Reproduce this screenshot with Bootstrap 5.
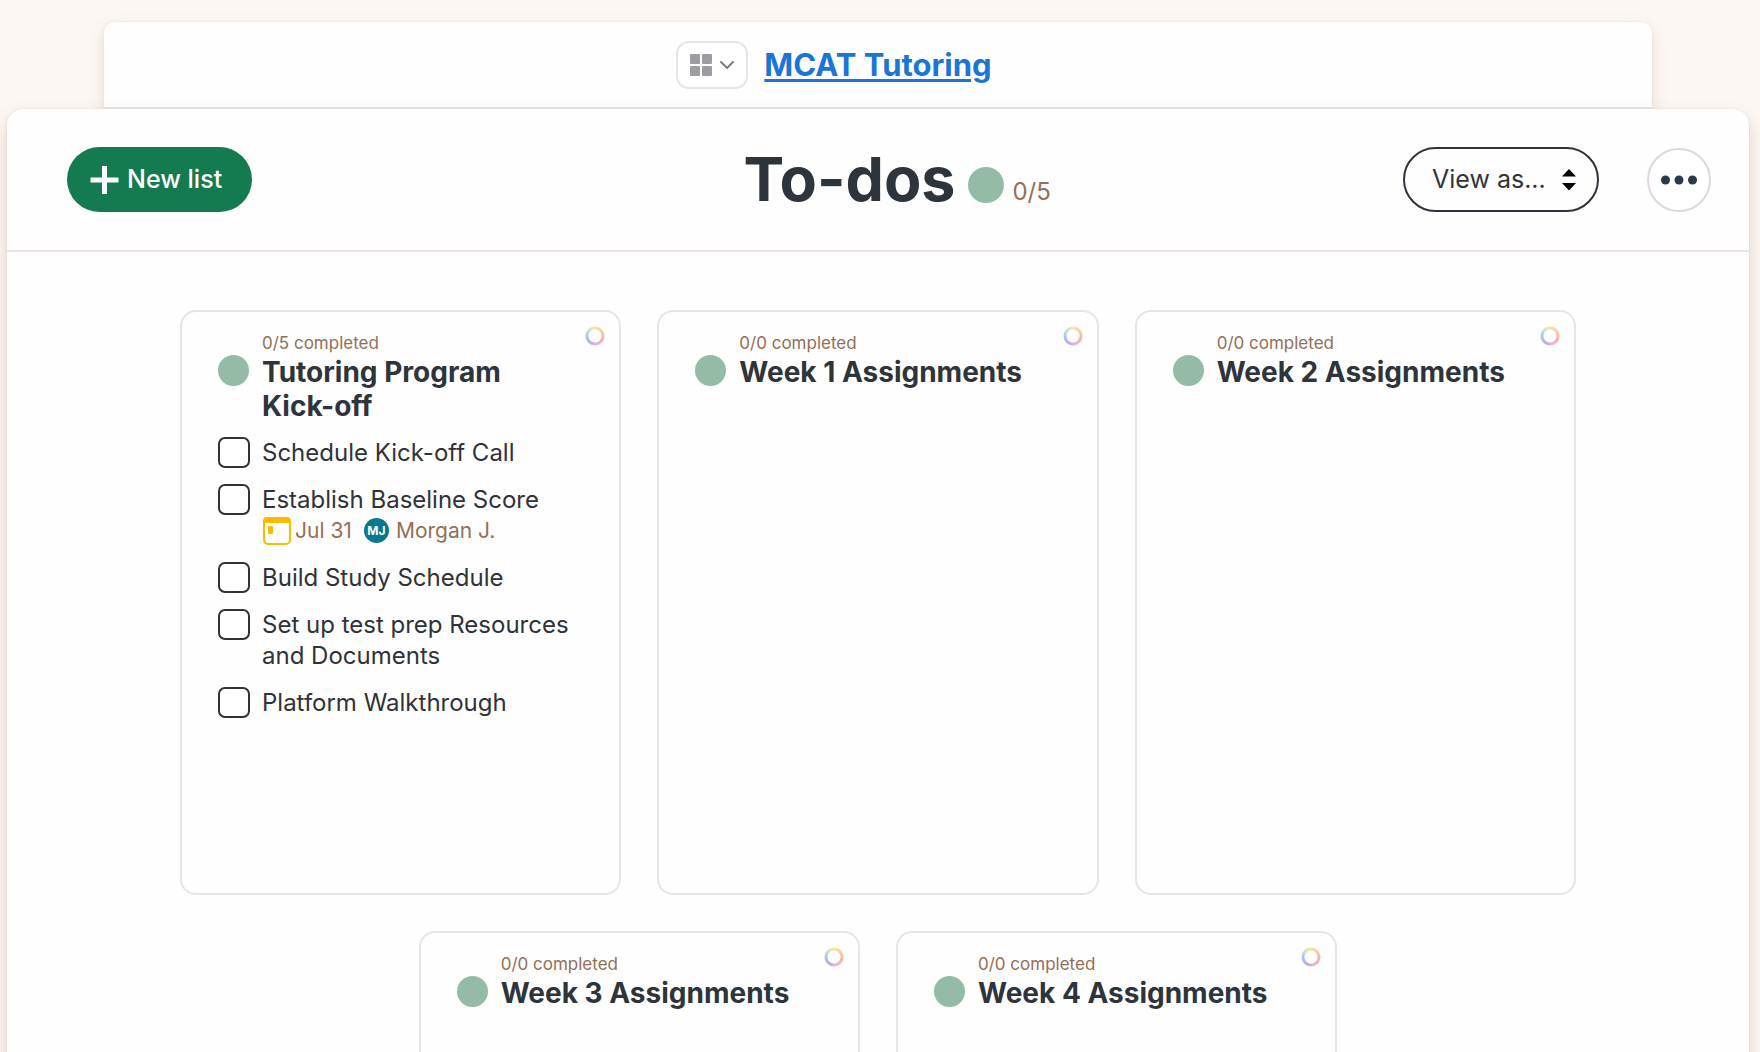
<!DOCTYPE html>
<html lang="en">
<head>
<meta charset="utf-8">
<meta name="viewport" content="width=device-width, initial-scale=1">
<title>To-dos</title>
<link href="https://cdn.jsdelivr.net/npm/bootstrap@5.3.0/dist/css/bootstrap.min.css" rel="stylesheet">
<style>
  :root { --ink: #2e343b; --tan: #936f56; --line: #e5e4e7; --sage: #94bba6; }
  html { overflow: hidden; }
  body { font-family: Inter, "Liberation Sans", sans-serif; color: var(--ink); background: #fdf7f3; padding: 22px 11px 0 7px; height: 100vh; overflow: hidden; }
  .sheet-back { margin: 0 97px; height: 87px; border-radius: 10px 10px 0 0; background: #fefefe; box-shadow: 0 6px 16px rgba(110, 80, 40, .16), 0 0 2px rgba(110, 70, 30, .1); border-bottom: 2px solid #ebe9eb; }
  .sheet { background: #fefefe; border-radius: 16px 16px 0 0; box-shadow: 0 8px 18px rgba(110, 60, 30, .2), 0 0 2px rgba(110, 70, 30, .12); position: relative; }
  .tri { display: grid; grid-template-columns: 1fr auto 1fr; align-items: center; }
  .switcher { width: 72px; height: 48px; border: 2px solid var(--line); border-radius: 13px; background: #fff; margin-right: 16px; }
  .project-link { font-size: 31px; line-height: 40px; font-weight: 700; color: #1b75d8; text-decoration: underline; text-decoration-thickness: 3px; text-underline-offset: 3px; }
  .bar { padding: 38px; border-bottom: 2px solid #efe3dd; }
  .btn-new { --bs-btn-font-size: 25px; --bs-btn-line-height: 1; --bs-btn-padding-y: 0; --bs-btn-padding-x: 23px; --bs-btn-color: #fff; --bs-btn-bg: #147a4f; --bs-btn-hover-bg: #0f6440; --bs-btn-hover-color: #fff; --bs-btn-border-width: 0; height: 65px; gap: 8px; margin-left: 22px; padding-right: 30px; font-weight: 500; }
  .page-title { font-size: 61px; line-height: 65px; font-weight: 700; }
  .dot { flex: none; display: block; border-radius: 50%; background: var(--sage); width: 31px; height: 31px; }
  .dot-lg { width: 36px; height: 36px; margin: 10px 8px 0 13px; }
  .tally { font-size: 24px; line-height: 30px; color: var(--tan); padding-top: 24px; }
  .view-select { appearance: none; width: 196px; height: 65px; border: 2px solid var(--ink); border-radius: 33px; background: transparent; color: #33343a; font-size: 25px; padding: 0 40px 0 27px; }
  .view-arrows { position: absolute; right: 23px; top: 22px; pointer-events: none; }
  .btn-more { width: 64px; height: 64px; border: 2px solid #dcd9de; border-radius: 50%; background: #fff; color: #2c3a45; }
  .lists { padding: 58px 173px 0; gap: 36px; }
  .todo-list { flex: 0 0 calc((100% - 72px) / 3); height: 585px; border: 2px solid var(--line); border-radius: 16px; padding: 21px 36px; position: relative; }
  .done-count { font-size: 17px; line-height: 20px; margin-bottom: 2px; color: var(--tan); padding-left: 44px; }
  .list-title { font-size: 28px; line-height: 34px; font-weight: 700; }
  .pair { display: flex; gap: 13px; }
  .items { margin-top: 14px; display: grid; gap: 16px; }
  .item-text { font-size: 24px; line-height: 31px; color: #303237; }
  .tick { appearance: none; flex: none; width: 32px; height: 31px; margin: 0 -1px 0 0; border: 2px solid #303237; border-radius: 7px; background: #fff; }
  .tick:checked { background: #147a4f; }
  .meta { font-size: 21px; line-height: 31px; color: var(--tan); }
  .face { width: 25px; height: 25px; border-radius: 50%; background: #08788e; color: #fff; font-size: 12px; line-height: 25px; font-weight: 700; text-align: center; margin: 0 7px 0 12px; }
  .hue { position: absolute; top: 14px; right: 14px; width: 20px; height: 20px; padding: 0; border: 0; border-radius: 50%; background: conic-gradient(#fbe3a0, #fbc4a0 70deg, #f9b0ac 110deg, #ecb0dc 165deg, #bda9f0 210deg, #a9bff8 260deg, #b9e3cc 305deg, #fbe9a6); -webkit-mask: radial-gradient(circle, transparent 6px, #000 7px, #000 9px, transparent 10px); mask: radial-gradient(circle, transparent 6px, #000 7px, #000 9px, transparent 10px); }
</style>
</head>
<body>
<nav class="sheet-back tri" aria-label="Project">
  <button class="switcher d-flex align-items-center justify-content-center ms-auto p-0" type="button" aria-label="Switch tool">
    <svg width="44" height="22" viewBox="0 0 44 22" aria-hidden="true"><g fill="#9c9ca2"><rect width="10" height="10" rx="1"/><rect x="12" width="10" height="10" rx="1"/><rect y="12" width="10" height="10" rx="1"/><rect x="12" y="12" width="10" height="10" rx="1"/></g><path d="M31 8l6 6 6-6" fill="none" stroke="#7c7c84" stroke-width="2" stroke-linecap="round" stroke-linejoin="round"/></svg>
  </button>
  <a class="project-link" href="#">MCAT Tutoring</a>
</nav>
<main class="sheet">
  <header class="bar tri">
    <div><button class="btn btn-new rounded-pill d-inline-flex align-items-center" type="button"><svg width="29" height="28" viewBox="0 0 29 28" aria-hidden="true"><path d="M14.500 0v28M.5 14h28" stroke="#fff" stroke-width="5"/></svg>New list</button></div>
    <div class="d-flex align-items-center"><h1 class="page-title m-0">To-dos</h1><span class="dot dot-lg"></span></div>
    <div class="d-flex align-items-center">
      <span class="tally">0/5</span>
      <div class="position-relative ms-auto me-5">
        <select class="view-select" aria-label="View as"><option>View as...</option><option>List</option><option>Cards</option></select>
        <svg class="view-arrows" width="14" height="22" viewBox="0 0 14 22" aria-hidden="true"><path d="M0 7.500L7 0l7 7.500zM0 14h14l-7 7.500z"/></svg>
      </div>
      <button class="btn-more p-0" type="button" aria-label="More options"><svg class="d-block mx-auto" width="36" height="10" viewBox="0 0 36 10" fill="currentColor" aria-hidden="true"><circle cx="4.500" cy="5" r="4.500"/><circle cx="18" cy="5" r="4.500"/><circle cx="31.500" cy="5" r="4.500"/></svg></button>
    </div>
  </header>
  <div class="lists d-flex flex-wrap justify-content-center">
    <section class="todo-list">
      <button class="hue" type="button" aria-label="Change color"></button>
      <div class="done-count">0/5 completed</div>
      <div class="pair"><span class="dot"></span><h2 class="list-title m-0">Tutoring Program <span class="text-nowrap">Kick-off</span></h2></div>
      <div class="items">
        <div class="pair"><input class="tick" type="checkbox" id="t1"><label class="item-text" for="t1">Schedule Kick-off Call</label></div>
        <div class="pair"><input class="tick" type="checkbox" id="t2"><div><label class="item-text d-block" for="t2">Establish Baseline Score</label>
          <div class="meta d-flex align-items-center"><svg class="me-1" width="29" height="28" viewBox="0 0 29 28" aria-hidden="true"><rect x="2" y="1" width="26" height="26" rx="4" fill="#fff" stroke="#ffb900" stroke-width="2"/><path d="M1 6V4a4 4 0 0 1 4-4h20a4 4 0 0 1 4 4v2z" fill="#ffb900"/><rect x="6" y="9" width="5" height="8" rx="1" fill="#ffb900"/></svg><span>Jul 31</span><span class="face">MJ</span><span>Morgan J.</span></div></div></div>
        <div class="pair"><input class="tick" type="checkbox" id="t3"><label class="item-text" for="t3">Build Study Schedule</label></div>
        <div class="pair"><input class="tick" type="checkbox" id="t4"><label class="item-text" for="t4">Set up test prep Resources and Documents</label></div>
        <div class="pair"><input class="tick" type="checkbox" id="t5"><label class="item-text" for="t5">Platform Walkthrough</label></div>
      </div>
    </section>
    <section class="todo-list">
      <button class="hue" type="button" aria-label="Change color"></button>
      <div class="done-count">0/0 completed</div>
      <div class="pair"><span class="dot"></span><h2 class="list-title m-0">Week 1 Assignments</h2></div>
    </section>
    <section class="todo-list">
      <button class="hue" type="button" aria-label="Change color"></button>
      <div class="done-count">0/0 completed</div>
      <div class="pair"><span class="dot"></span><h2 class="list-title m-0">Week 2 Assignments</h2></div>
    </section>
    <section class="todo-list">
      <button class="hue" type="button" aria-label="Change color"></button>
      <div class="done-count">0/0 completed</div>
      <div class="pair"><span class="dot"></span><h2 class="list-title m-0">Week 3 Assignments</h2></div>
    </section>
    <section class="todo-list">
      <button class="hue" type="button" aria-label="Change color"></button>
      <div class="done-count">0/0 completed</div>
      <div class="pair"><span class="dot"></span><h2 class="list-title m-0">Week 4 Assignments</h2></div>
    </section>
  </div>
</main>
<script src="https://cdn.jsdelivr.net/npm/bootstrap@5.3.0/dist/js/bootstrap.bundle.min.js"></script>
</body>
</html>
